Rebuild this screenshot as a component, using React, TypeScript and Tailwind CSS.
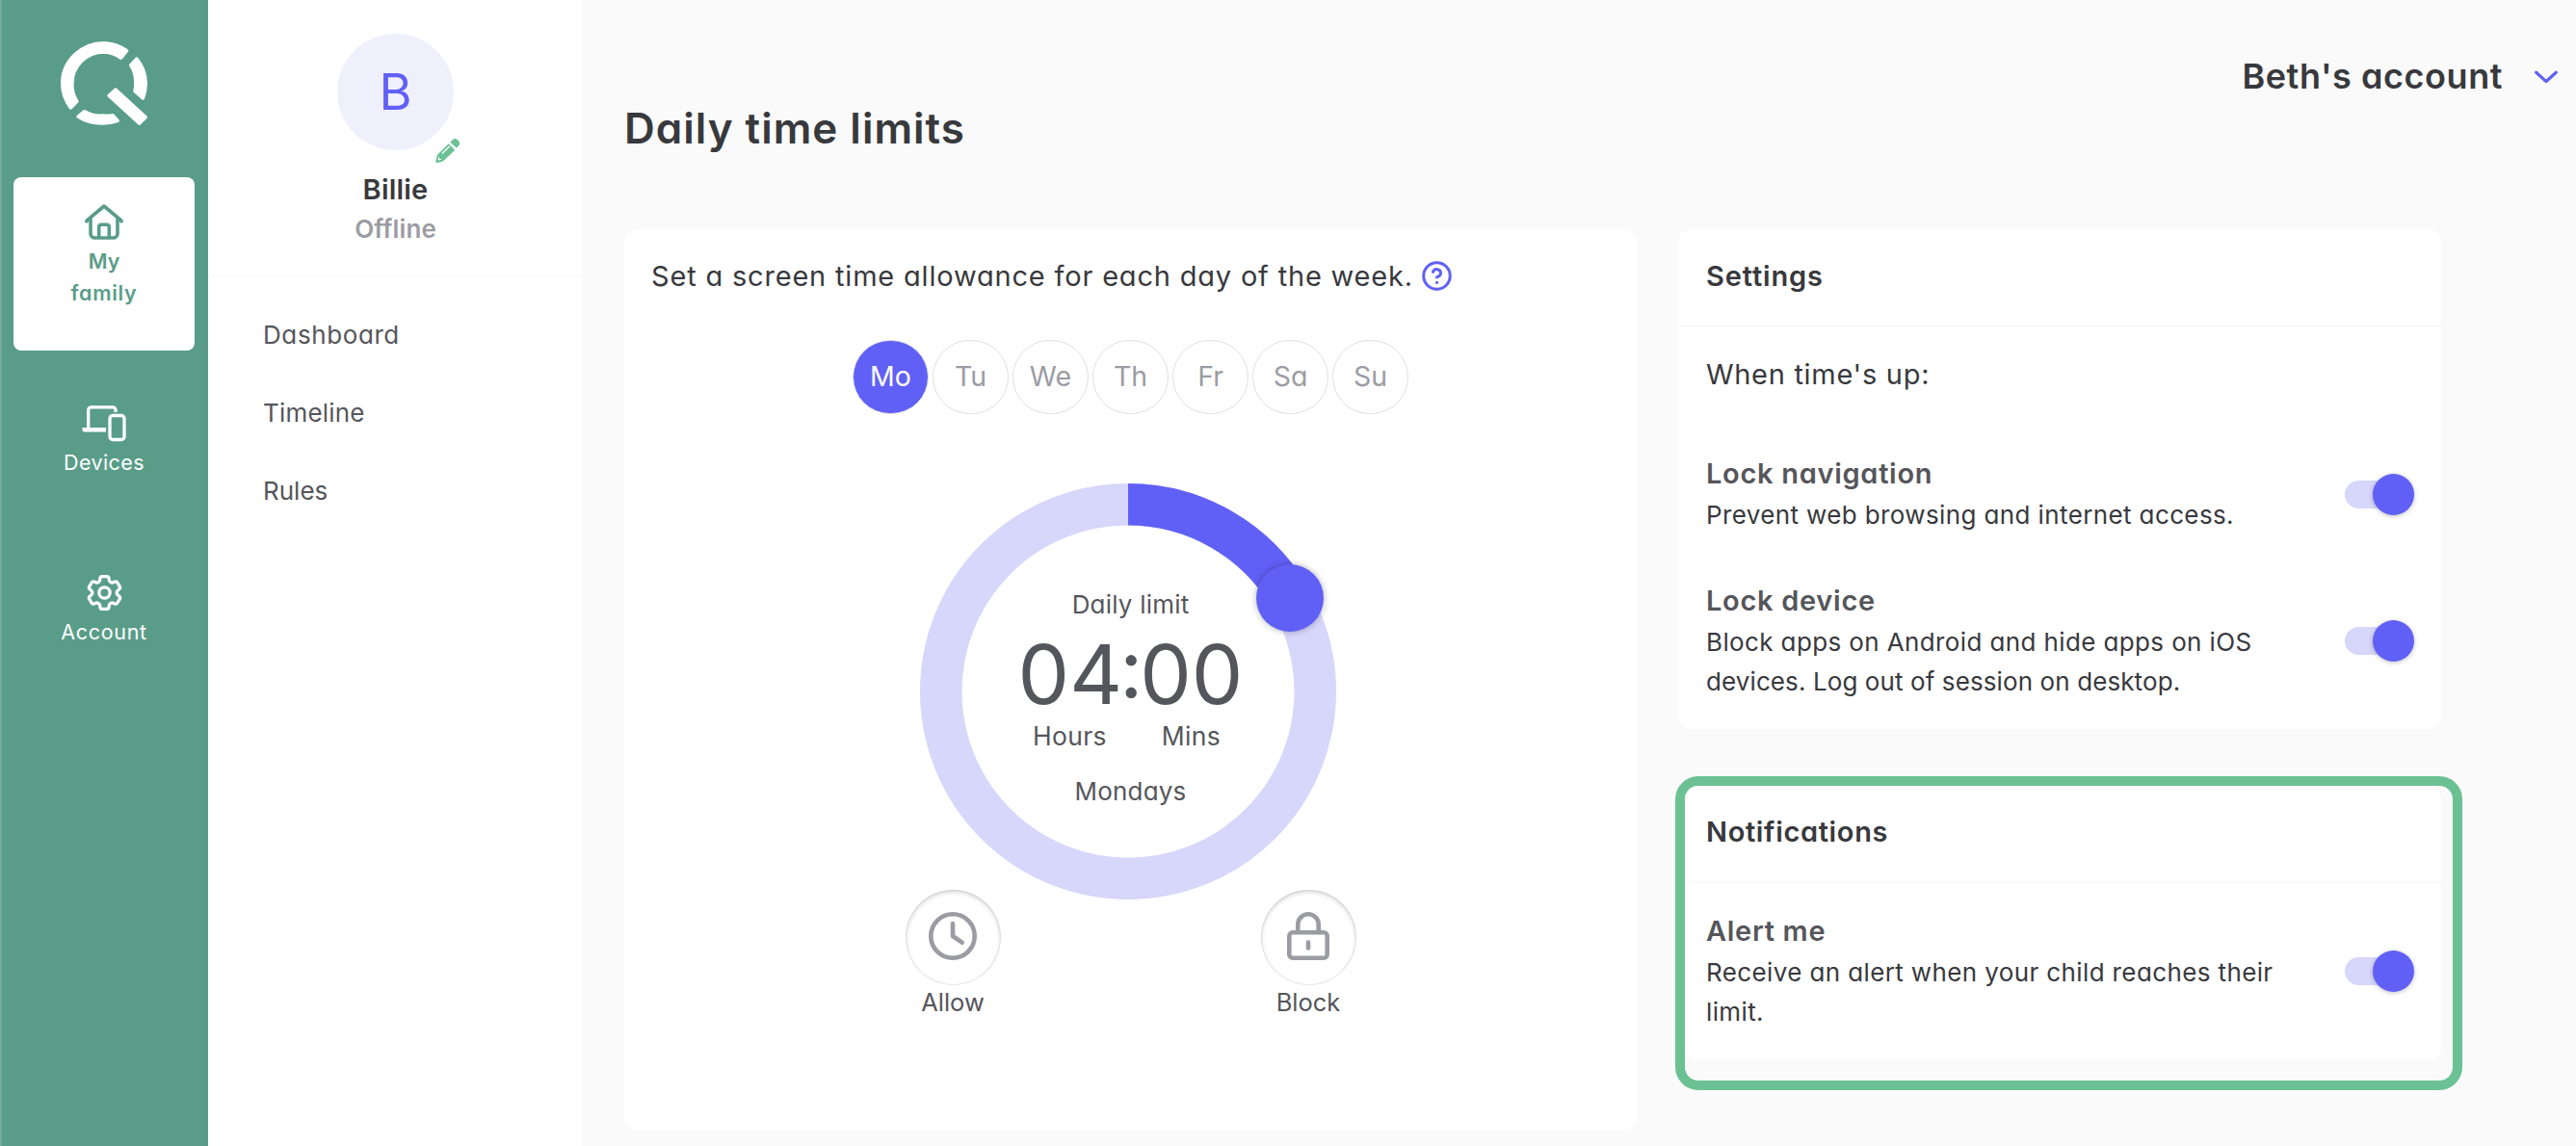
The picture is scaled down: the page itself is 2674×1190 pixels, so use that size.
import type { ReactNode } from "react";
import { HiOutlineCog6Tooth } from "react-icons/hi2";
import { CircleHelp } from "lucide-react";

function Logo() {
  return (
    <svg className="h-[90px] w-[94px]" viewBox="33 33 282 270" fill="#fff" stroke="#fff" strokeWidth="10" strokeLinejoin="round">
      <path d="M70 246A130 126 0 0 1 44 169A130 125 0 0 1 174 44A130 126 0 0 1 245 68L227 91A99 97 0 0 0 174 72A99 97 0 0 0 75 169A99 97 0 0 0 90 226Z" />
      <path d="M276 93A130 125 0 0 1 304 169A130 125 0 0 1 295 216L270 194A99 97 0 0 0 272 169A99 97 0 0 0 257 113Z" />
      <path d="M93 273L113 257A99 97 0 0 0 170 270A99 97 0 0 0 201 269L217 286A130 125 0 0 1 167 294A130 125 0 0 1 93 273Z" />
      <path d="M210 189L304 275L284 295L189 208Z" />
    </svg>
  );
}

function HomeIcon() {
  return (
    <svg className="h-10 w-11" viewBox="0 0 44 40" fill="none" stroke="currentColor" strokeWidth="3.6" strokeLinecap="round" strokeLinejoin="round">
      <path d="M4 20v-.8L22 4l18 15.200v.8" />
      <path d="M8 17v15.500a4.500 4.500 0 0 0 4.500 4.500h19a4.500 4.500 0 0 0 4.500-4.500V17" />
      <path d="M16.700 36V25.500a2.200 2.200 0 0 1 2.200-2.200h6.200a2.200 2.200 0 0 1 2.200 2.200V36" />
    </svg>
  );
}

function DevicesIcon() {
  return (
    <svg className="h-10 w-12" viewBox="0 0 48 40" fill="none" stroke="currentColor" strokeWidth="3.300">
      <path d="M7.700 26V6.800a3 3 0 0 1 3-3H33a3 3 0 0 1 3 3V9" />
      <path d="M1.500 25h24.500v4.500H4a2.500 2.500 0 0 1-2.500-2.500z" fill="currentColor" stroke="none" />
      <rect x="30" y="12.500" width="15" height="25" rx="3" />
    </svg>
  );
}

function PencilIcon() {
  return (
    <svg className="h-[25px] w-[25px]" viewBox="66 42 75 75" fill="#6cc194">
      <path d="M107 58L127 77L92 110Q85 115 67 117Q66 116 72 92Z" />
      <path d="M112 53L120 45Q127 39 135 46Q145 55 139 63L132 71Z" />
      <path d="M88 87L109 67" stroke="#fff" strokeWidth="4" strokeLinecap="round" />
      <path d="M77 96L78 104L86 106L77 110L74 106Z" fill="#fff" />
    </svg>
  );
}

function NavItem({ icon, label, tracking }: { icon: ReactNode; label: string; tracking: string }) {
  return (
    <div className="flex h-[176px] flex-col items-center pt-[26px] text-center text-[21.5px] leading-[33px] text-white">
      <div className="flex h-[45px] items-start justify-center">{icon}</div>
      <span className={tracking}>{label}</span>
    </div>
  );
}

function Toggle() {
  return (
    <div className="flex h-[43px] w-[72px] shrink-0 items-center justify-end rounded-full">
      <div className="-mr-[31px] h-[29px] w-[60px] rounded-full bg-[#d7d6fb]" />
      <div className="relative h-[43px] w-[43px] rounded-full bg-[#6160f6] shadow-[0_1px_5px_rgba(0,0,0,0.25)]" />
    </div>
  );
}

function Option({ title, children }: { title: string; children: ReactNode }) {
  return (
    <div className="flex items-center justify-between">
      <div className="w-[620px]">
        <div className="text-[29px] leading-[41px] font-semibold tracking-[0.7px] text-[#55565b]">{title}</div>
        <div className="pt-0.5 text-[26px] leading-[41px] tracking-[0.38px] whitespace-nowrap text-[#38393d]">{children}</div>
      </div>
      <Toggle />
    </div>
  );
}

function RoundAction({ label, children }: { label: string; children: ReactNode }) {
  return (
    <div className="flex w-[99px] flex-col items-center">
      <div className="flex h-[99px] w-[99px] items-start justify-center rounded-full bg-white pt-[23px] text-[#9b9ca3] shadow-[inset_0_0_0_1px_rgba(0,0,0,0.06),inset_0_2px_5px_rgba(0,0,0,0.18)]">
        {children}
      </div>
      <span className="text-[25.5px] leading-9">{label}</span>
    </div>
  );
}

const days = ["Mo", "Tu", "We", "Th", "Fr", "Sa", "Su"];

export default function App() {
  return (
    <div className="flex h-[1190px] w-[2674px] overflow-hidden bg-[#fafafa] font-['Inter',sans-serif] text-[#38393d] [font-feature-settings:'cv11']">
      <aside className="flex w-[216px] shrink-0 flex-col border-l-2 border-[#74ab9b] bg-[#599d89]">
        <div className="flex h-[184px] items-start justify-center pt-[41px] pr-0.5">
          <Logo />
        </div>
        <div className="mr-3.5 ml-3 flex h-[180px] flex-col items-center rounded-lg bg-white pt-[26px] text-[21.5px] leading-[33px] font-semibold text-[#599d89]">
          <div className="h-[45px]">
            <HomeIcon />
          </div>
          <span>My</span>
          <span className="tracking-[0.7px]">family</span>
        </div>
        <div className="mt-[29px] pr-0.5">
          <NavItem icon={<DevicesIcon />} label="Devices" tracking="tracking-[0.4px]" />
          <NavItem icon={<HiOutlineCog6Tooth className="-mt-0.5 h-[45px] w-[45px]" strokeWidth={1.750} />} label="Account" tracking="tracking-[0.7px]" />
        </div>
      </aside>

      <aside className="flex w-[389px] shrink-0 flex-col bg-white">
        <div className="flex h-[287px] flex-col items-center border-b border-[#f7f7f7] pt-[35px]">
          <div className="relative flex h-[121px] w-[121px] items-center justify-center rounded-full bg-[#f0f0fd] text-[52px] text-[#6160f6]">
            B
            <div className="absolute top-[109px] left-[102px]">
              <PencilIcon />
            </div>
          </div>
          <div className="mt-5 text-[29px] leading-[42px] font-semibold tracking-[0.2px]">Billie</div>
          <div className="text-[26px] leading-10 font-semibold tracking-[0.1px] text-[#9b9ca3]">Offline</div>
        </div>
        <nav className="flex flex-col pt-5 pl-[57px] text-[26px] leading-[81px] text-[#55565b]">
          <span className="tracking-[0.6px]">Dashboard</span>
          <span className="tracking-[0.2px]">Timeline</span>
          <span>Rules</span>
        </nav>
      </aside>

      <main className="flex grow flex-col pl-[43px]">
        <header className="flex h-[238px] items-start justify-between pr-[19px]">
          <h1 className="pt-[108px] text-[44px] leading-[50px] font-semibold tracking-[1px]">Daily time limits</h1>
          <div className="flex items-center gap-[33px] pt-[59px]">
            <span className="text-[36px] leading-[41px] font-semibold tracking-[0.55px]">Beth's account</span>
            <svg className="h-3.5 w-6" viewBox="0 0 24 14" fill="none" stroke="#6160f6" strokeWidth="3.200" strokeLinecap="round" strokeLinejoin="round">
              <path d="M1.700 2.200L12 11.600L22.300 2.200" />
            </svg>
          </div>
        </header>

        <div className="flex items-start gap-[43px]">
          <section className="flex h-[936px] w-[1051px] flex-col items-center rounded-[14px] bg-white pt-[29px]">
            <div className="flex w-full items-center gap-2 pl-7">
              <span className="text-[29px] leading-10 tracking-[0.81px] whitespace-nowrap">Set a screen time allowance for each day of the week.</span>
              <CircleHelp className="-mt-0.5 h-[33px] w-[33px] text-[#6160f6]" strokeWidth={2.200} />
            </div>

            <div className="mt-[46px] flex gap-1">
              {days.map((d, i) => (
                <div
                  key={d}
                  className={
                    i === 0
                      ? "flex h-[77px] w-[79px] items-center justify-center rounded-full border border-[#e6e6e6] bg-[#6160f6] text-[28.5px] text-white"
                      : "flex h-[77px] w-[79px] items-center justify-center rounded-full border border-[#e0e0e0] bg-white text-[28.5px] text-[#9b9ca3]"
                  }
                >
                  {d}
                </div>
              ))}
            </div>

            <div className="relative mt-[72px] mr-[5px] h-[432px] w-[432px]">
              <svg className="absolute inset-0 h-full w-full" viewBox="0 0 432 432" fill="none" strokeWidth="43.500">
                <circle cx="216" cy="216" r="194.250" stroke="#d7d6fb" />
                <path d="M216 21.750A194.250 194.250 0 0 1 384.200 118.900" stroke="#6160f6" />
              </svg>
              <div className="absolute top-[84px] left-[349px] h-[70px] w-[70px] rounded-full bg-[#6160f6] shadow-[0_0_7px_rgba(0,0,0,0.3)]" />
              <div className="absolute inset-0 flex flex-col items-center pt-[108px] pl-[5px] text-[#55565b]">
                <span className="text-[26px] leading-9 tracking-[0.2px]">Daily limit</span>
                <div className="mt-6 flex h-[62px] text-[85px] leading-[62px]">
                  <span>04</span>
                  <span className="-mt-[7px] flex w-[18px] justify-center">:</span>
                  <span>00</span>
                </div>
                <div className="mt-3.5 mr-2 flex gap-[57px] text-[26.5px] leading-9 tracking-[0.3px]">
                  <span>Hours</span>
                  <span>Mins</span>
                </div>
                <span className="mt-[22px] text-[26px] leading-9 tracking-[0.2px]">Mondays</span>
              </div>
            </div>

            <div className="-mt-2.5 flex w-[468px] justify-between text-[#55565b]">
              <RoundAction label="Allow">
                <svg className="h-[50px] w-[50px]" viewBox="0 0 50 50" fill="none" stroke="currentColor" strokeWidth="4.600" strokeLinecap="round" strokeLinejoin="round">
                  <circle cx="25" cy="25" r="22.700" />
                  <path d="M25 12v13l9.700 6.700" />
                </svg>
              </RoundAction>
              <RoundAction label="Block">
                <svg className="h-[50px] w-[50px]" viewBox="0 0 50 50" fill="none" stroke="currentColor" strokeWidth="4.600" strokeLinecap="round" strokeLinejoin="round">
                  <rect x="5.300" y="21.300" width="39.400" height="26.400" rx="3.500" />
                  <path d="M14.300 21V13a10.700 10.700 0 0 1 21.400 0V21M25 31.500v6" />
                </svg>
              </RoundAction>
            </div>
          </section>

          <div className="flex flex-col">
            <section className="h-[519px] w-[792px] rounded-[14px] bg-white">
              <h2 className="h-[101px] border-b border-[#f7f7f7] pl-[29px] text-[29px] leading-[98px] font-semibold tracking-[0.850px]">Settings</h2>
              <div className="flex flex-col pt-[30px] pr-7 pl-[29px]">
                <p className="text-[29px] leading-10 tracking-[0.7px]">When time's up:</p>
                <div className="mt-[62px] flex flex-col gap-[48px]">
                  <Option title="Lock navigation">Prevent web browsing and internet access.</Option>
                  <Option title="Lock device">
                    Block apps on Android and hide apps on iOS
                    <br />
                    <span className="tracking-[0.1px]">devices. Log out of session on desktop.</span>
                  </Option>
                </div>
              </div>
            </section>

            <section className="mt-[49px] -ml-[3px] h-[326px] w-[817px] rounded-3xl border-[10px] border-[#6cc194]">
              <div className="h-[285px] w-[785px] rounded-[14px] bg-white">
                <h2 className="h-[100px] border-b border-[#f7f7f7] pl-[22px] text-[29px] leading-[96px] font-semibold tracking-[0.650px]">Notifications</h2>
                <div className="pt-[30px] pr-7 pl-[22px]">
                  <Option title="Alert me">
                    Receive an alert when your child reaches their
                    <br />
                    limit.
                  </Option>
                </div>
              </div>
            </section>
          </div>
        </div>
      </main>
    </div>
  );
}
